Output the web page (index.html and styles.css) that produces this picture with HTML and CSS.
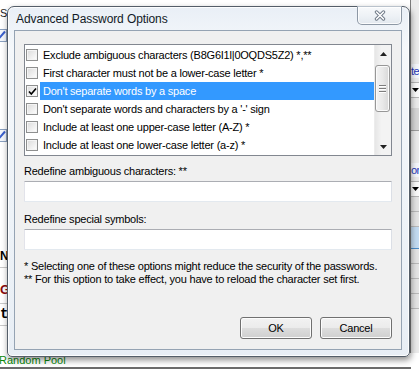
FILE: index.html
```html
<!DOCTYPE html>
<html>
<head>
<meta charset="utf-8">
<title>Advanced Password Options</title>
<link rel="stylesheet" href="styles.css">
</head>
<body>
<div class="screen">
  <div class="app">
    <div class="app-body">
      <div class="app-left">
        <div class="al-se">Se</div>
        <div class="al-chk"><span class="bgbox"><svg width="11" height="11" viewBox="0 0 11 11"><path d="M1 5.5 L4 8.5 L10 1.5" fill="none" stroke="#3a5fcd" stroke-width="2"/></svg></span></div>
        <div class="al-chk al-chk2"><span class="bgbox"><svg width="11" height="11" viewBox="0 0 11 11"><path d="M1 5.5 L4 8.5 L10 1.5" fill="none" stroke="#3a5fcd" stroke-width="2"/></svg></span></div>
        <div class="al-n">N</div>
        <div class="al-g">G</div>
        <div class="al-t">t</div>
      </div>
      <div class="app-right">
        <div class="ar-top"></div>
        <div class="ar-link">te</div>
        <div class="ar-drop"><svg width="7" height="4" viewBox="0 0 7 4"><polygon points="0,0 7,0 3.5,4" fill="#000"/></svg></div>
        <div class="ar-band"></div>
        <div class="ar-gap"></div>
        <div class="ar-link ar-link2">or</div>
        <div class="ar-drop"><svg width="7" height="4" viewBox="0 0 7 4"><polygon points="0,0 7,0 3.5,4" fill="#000"/></svg></div>
        <div class="ar-cell"></div>
        <div class="ar-cell"></div>
        <div class="ar-sel"></div>
        <div class="ar-cell"></div>
        <div class="ar-cell"></div>
        <div class="ar-cell"></div>
        <div class="ar-cell"></div>
      </div>
    </div>
    <div class="app-status">Random Pool</div>
  </div>

  <div class="dialog">
    <div class="titlebar">
      <span class="title">Advanced Password Options</span>
      <span class="close">
        <svg width="12" height="11" viewBox="0 0 12 11">
          <path d="M2.5 2 L9.5 9 M9.5 2 L2.5 9" stroke="#6d7886" stroke-width="3.4" stroke-linecap="round"/>
          <path d="M2.5 2 L9.5 9 M9.5 2 L2.5 9" stroke="#ffffff" stroke-width="1.6" stroke-linecap="round"/>
        </svg>
      </span>
    </div>
    <div class="client">
      <div class="listbox">
        <div class="rows">
          <div class="row"><span class="cb"></span><span class="txt">Exclude ambiguous characters (B8G6I1l|0OQDS5Z2) *,**</span></div>
          <div class="row"><span class="cb"></span><span class="txt">First character must not be a lower-case letter *</span></div>
          <div class="row sel"><span class="cb"><svg width="9" height="9" viewBox="0 0 9 9"><path d="M1 4.5 L3.3 7 L8 1.5" fill="none" stroke="#000" stroke-width="1.6"/></svg></span><span class="txt">Don't separate words by a space</span></div>
          <div class="row"><span class="cb"></span><span class="txt">Don't separate words and characters by a '-' sign</span></div>
          <div class="row"><span class="cb"></span><span class="txt">Include at least one upper-case letter (A-Z) *</span></div>
          <div class="row"><span class="cb"></span><span class="txt">Include at least one lower-case letter (a-z) *</span></div>
        </div>
        <div class="vscroll">
          <div class="sb-btn"><svg width="7" height="4" viewBox="0 0 7 4"><polygon points="0,4 7,4 3.5,0" fill="#222"/></svg></div>
          <div class="sb-track">
            <div class="sb-thumb"><span class="grip"></span><span class="grip"></span><span class="grip"></span></div>
          </div>
          <div class="sb-btn"><svg width="7" height="4" viewBox="0 0 7 4"><polygon points="0,0 7,0 3.5,4" fill="#222"/></svg></div>
        </div>
      </div>

      <label class="lbl">Redefine ambiguous characters: **</label>
      <div class="edit"></div>
      <label class="lbl lbl2">Redefine special symbols:</label>
      <div class="edit"></div>

      <div class="notes">
        <div>* Selecting one of these options might reduce the security of the passwords.</div>
        <div>** For this option to take effect, you have to reload the character set first.</div>
      </div>

      <div class="buttons">
        <span class="btn">OK</span>
        <span class="btn">Cancel</span>
      </div>
    </div>
  </div>
</div>
</body>
</html>
```

FILE: styles.css
```css
* { box-sizing: border-box; }

html, body {
  margin: 0;
  padding: 0;
  width: 419px;
  height: 373px;
  overflow: hidden;
  background: #ffffff;
  font-family: "Liberation Sans", Arial, sans-serif;
  font-size: 11px;
  color: #000;
}

.screen {
  position: relative;
  width: 419px;
  height: 373px;
}

/* ---------- background application ---------- */
.app {
  width: 419px;
  height: 373px;
  display: flex;
  flex-direction: column;
  padding-bottom: 4px;
  background: #fff;
}

.app-body {
  flex: 1;
  display: flex;
  min-height: 0;
}

.app-left {
  flex: 1;
  display: flex;
  flex-direction: column;
  white-space: nowrap;
  overflow: hidden;
}

.al-se {
  margin-top: 7px;
  height: 13px;
  line-height: 13px;
  color: #222;
}

.al-chk {
  margin-top: 9px;
  height: 13px;
  margin-left: -6px;
}
.al-chk2 { margin-top: 87px; }

.bgbox {
  display: inline-flex;
  align-items: center;
  justify-content: center;
  width: 13px;
  height: 13px;
  border: 1px solid #8aa0c0;
  background: #f4f7fb;
}

.al-n {
  margin-top: 108px;
  height: 18px;
  line-height: 13px;
  font-weight: bold;
  font-size: 12px;
  border-bottom: 1px solid #c9c9c9;
}

.al-g {
  height: 36px;
  padding-top: 15px;
  line-height: 14px;
  font-weight: bold;
  font-size: 13px;
  color: #8b0a0a;
  border-bottom: 1px solid #c9c9c9;
}

.al-t {
  height: 22px;
  line-height: 21px;
  font-family: "Liberation Mono", monospace;
  font-weight: bold;
  font-size: 14px;
  border-bottom: 1px solid #c9c9c9;
}

.app-right {
  width: 9px;
  display: flex;
  flex-direction: column;
  background: #ebebeb;
  border-left: 1px solid #7b7b7b;
  overflow: hidden;
  white-space: nowrap;
}

.ar-top { height: 64px; }

.ar-link {
  height: 14px;
  line-height: 14px;
  color: #1f37b8;
  background: #f4f6fb;
  letter-spacing: -0.5px;
}

.ar-drop {
  margin-top: 4px;
  height: 16px;
  background: #fafafa;
  border-top: 1px solid #b5b5b5;
  border-bottom: 1px solid #b5b5b5;
  display: flex;
  align-items: center;
  padding-left: 1px;
}

.ar-band {
  margin-top: 10px;
  height: 23px;
  background: #d6d6d6;
  border-bottom: 1px solid #9d9d9d;
}

.ar-gap { height: 32px; }

.ar-cell {
  height: 15px;
  border-bottom: 1px solid #b9b9b9;
  background: #e4e4e4;
}

.ar-sel {
  height: 22px;
  background: #c3dbf1;
  border-bottom: 1px solid #4a8cc8;
}

.app-status {
  width: 412px;
  height: 16px;
  line-height: 14px;
  color: #0a8a0a;
  margin-left: -1px;
  border-bottom: 2px solid #6b6b6b;
  white-space: nowrap;
}

/* ---------- dialog window ---------- */
.dialog {
  position: absolute;
  left: 7px;
  top: 6px;
  width: 403px;
  height: 351px;
  border: 1px solid #545e69;
  border-radius: 7px 7px 5px 5px;
  background: linear-gradient(180deg, #e9eff6 0%, #f5f8fb 12%, #eef3f8 60%, #e8eef5 100%);
  box-shadow: inset 0 0 0 1px rgba(255,255,255,0.85), 1px 3px 6px rgba(0,0,0,0.45);
  padding: 0 7px 6px 6px;
  display: flex;
  flex-direction: column;
}

.titlebar {
  height: 23px;
  display: flex;
  align-items: flex-start;
  justify-content: space-between;
}

.title {
  align-self: center;
  margin-top: 1px;
  padding-left: 2px;
  font-size: 12px;
  color: #111a26;
  letter-spacing: -0.1px;
}

.close {
  width: 45px;
  height: 19px;
  margin-top: -1px;
  border: 1px solid #8d98a5;
  border-top-color: #b9c2cc;
  border-radius: 0 0 5px 5px;
  background: linear-gradient(180deg, #f7f9fb 0%, #eef2f6 50%, #e2e8ee 100%);
  box-shadow: inset 0 0 0 1px rgba(255,255,255,0.8);
  display: flex;
  align-items: center;
  justify-content: center;
}

.client {
  flex: 1;
  border: 1px solid #95a3b3;
  background: #f0f0f0;
  padding: 13px 9px 10px 9px;
  display: flex;
  flex-direction: column;
  letter-spacing: -0.22px;
}

/* list box */
.listbox {
  height: 112px;
  border: 1px solid #828790;
  background: #fff;
  display: flex;
}

.rows {
  flex: 1;
  padding: 1px 0;
  display: flex;
  flex-direction: column;
}

.row {
  height: 18px;
  display: flex;
  align-items: center;
  white-space: nowrap;
}

.cb {
  width: 12px;
  height: 12px;
  margin-left: 1px;
  margin-right: 2px;
  border: 1px solid #8e8f8f;
  background: linear-gradient(135deg, #dadada 0%, #f0f0f0 60%, #ffffff 100%);
  box-shadow: inset 0 0 0 1px #f4f4f4;
  display: inline-flex;
  align-items: center;
  justify-content: center;
  flex: none;
}

.txt {
  flex: 1;
  height: 18px;
  line-height: 18px;
  padding-left: 3px;
}

.row.sel .txt {
  background: #3399ff;
  color: #fff;
}

.vscroll {
  width: 17px;
  display: flex;
  flex-direction: column;
  background: linear-gradient(90deg, #e6e6e6 0%, #f3f3f3 40%, #f3f3f3 100%);
  border-left: 1px solid #ececec;
}

.sb-btn {
  height: 17px;
  display: flex;
  align-items: center;
  justify-content: center;
}

.sb-track {
  flex: 1;
  padding-top: 3px;
  display: flex;
  flex-direction: column;
}

.sb-thumb {
  height: 47px;
  margin: 0 1px 0 0;
  border: 1px solid #979797;
  border-radius: 3px;
  background: linear-gradient(90deg, #f3f3f3 0%, #e9e9e9 50%, #d8d8d8 100%);
  box-shadow: inset 0 0 0 1px #fbfbfb;
  display: flex;
  flex-direction: column;
  align-items: center;
  justify-content: center;
  gap: 1px;
}

.grip {
  width: 7px;
  height: 2px;
  border-top: 1px solid #7d7d7d;
  border-bottom: 1px solid #ffffff;
}

/* labels + edits */
.lbl {
  display: block;
  margin-top: 9px;
  margin-bottom: 3px;
  line-height: 13px;
  height: 13px;
  white-space: nowrap;
}
.lbl2 { margin-top: 11px; }

.edit {
  height: 21px;
  background: #fff;
  border: 1px solid;
  border-color: #abadb3 #dbdfe6 #e3e9ef #e2e3ea;
  border-radius: 1px;
}

.notes {
  margin-top: 10px;
  line-height: 13px;
  white-space: nowrap;
}

.buttons {
  margin-top: auto;
  display: flex;
  justify-content: flex-end;
  gap: 8px;
}

.btn {
  width: 72px;
  height: 22px;
  border: 1px solid #707070;
  border-radius: 3px;
  background: linear-gradient(180deg, #f2f2f2 0%, #ebebeb 50%, #dddddd 51%, #cfcfcf 100%);
  box-shadow: inset 0 0 0 1px #fcfcfc;
  display: flex;
  align-items: center;
  justify-content: center;
  font-size: 11px;
}
```
